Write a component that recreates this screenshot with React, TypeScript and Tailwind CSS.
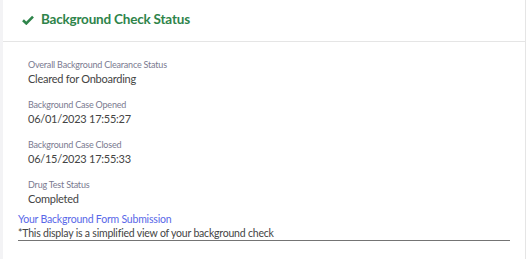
import React from 'react'

type Field = { label: string; value: string }

const fields: Field[] = [
    { label: 'Overall Background Clearance Status', value: 'Cleared for Onboarding' },
    { label: 'Background Case Opened', value: '06/01/2023 17:55:27' },
    { label: 'Background Case Closed', value: '06/15/2023 17:55:33' },
    { label: 'Drug Test Status', value: 'Completed' },
]

const CheckIcon = () => (
    <svg width="12" height="10" viewBox="0 0 12 10" className="shrink-0">
        <path d="M1 5.2 L4.3 8.4 L11 1.6" fill="none" stroke="#2e844a" strokeWidth="2.6" />
    </svg>
)

export default function App() {
    return (
        <div className="flex h-[259px] w-[526px] bg-[#f3f3f5] font-['Lato','Liberation_Sans',sans-serif]">
            <div className="ml-[3px] flex flex-1 flex-col border-r border-[#e5e5e5] bg-white">
                {/* header */}
                <div className="flex h-[42px] shrink-0 items-center gap-[7px] border-b border-[#e5e5e5] pb-[2px] pl-[19px]">
                    <CheckIcon />
                    <h2 className="text-[13.5px] font-bold tracking-[-0.2px] text-[#2e844a]">Background Check Status</h2>
                </div>

                <div className="flex flex-col pt-[17px]">
                    {fields.map(f => (
                        <div key={f.label} className="mb-[12px] pl-[25px]">
                            <div className="text-[9px] leading-[12px] tracking-[-0.2px] text-[#7a7a90]">{f.label}</div>
                            <div className="text-[11px] leading-[16px] tracking-[-0.25px] text-[#444444]">{f.value}</div>
                        </div>
                    ))}
                    <div className="-mt-[7px] pl-[15px] pr-[15px]">
                        <a className="block text-[10.5px] leading-[14px] tracking-[-0.2px] text-[#5867e8]">Your Background Form Submission</a>
                        <div className="border-b border-[#747474] text-[10.5px] leading-[14px] tracking-[-0.2px] text-[#444444]">
                            *This display is a simplified view of your background check
                        </div>
                    </div>
                </div>
            </div>
        </div>
    )
}
